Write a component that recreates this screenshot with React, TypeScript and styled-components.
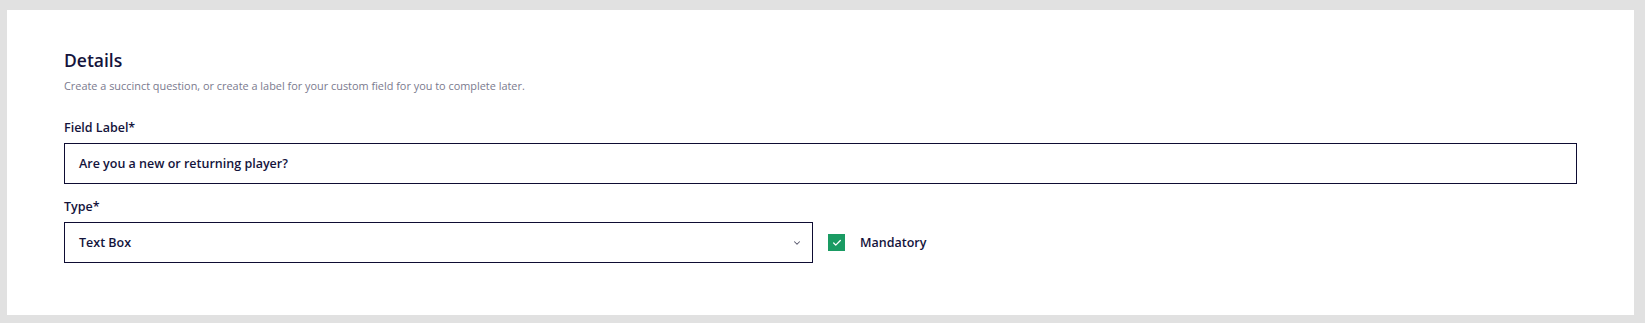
import React from 'react';
import styled, { createGlobalStyle } from 'styled-components';
import { ChevronDown, Check } from 'lucide-react';

const GlobalStyle = createGlobalStyle`
  html, body {
    margin: 0;
    padding: 0;
    background: #e1e1e1;
  }
  * {
    box-sizing: border-box;
  }
  body {
    font-family: 'Open Sans', 'Liberation Sans', sans-serif;
    color: #14143c;
  }
`;

const App = () => {
  return (
    <>
      <GlobalStyle />
      <Panel>
        <Heading>Details</Heading>
        <SubTitle>Create a succinct question, or create a label for your custom field for you to complete later.</SubTitle>

        <Field $top={25}>
          <Label>Field Label*</Label>
          <InputBox>Are you a new or returning player?</InputBox>
        </Field>

        <Field $top={14}>
          <Label>Type*</Label>
          <TypeRow>
            <InputBox>
              Text Box
              <Chevron>
                <ChevronDown size={10} strokeWidth={2.5} />
              </Chevron>
            </InputBox>
            <CheckRow>
              <CheckBox>
                <Check size={10} strokeWidth={3} color="#ffffff" />
              </CheckBox>
              <CheckLabel>Mandatory</CheckLabel>
            </CheckRow>
          </TypeRow>
        </Field>
      </Panel>
    </>
  );
};

const Panel = styled.div`
  margin: 10px 11px 8px 7px;
  height: 305px;
  padding: 38px 57px 0 57px;
  background: #ffffff;
  display: flex;
  flex-direction: column;
`;

const Heading = styled.div`
  font-size: 17.5px;
  line-height: 24px;
  font-weight: 600;
  color: #14143c;
`;

const SubTitle = styled.div`
  margin-top: 6px;
  font-size: 10.9px;
  line-height: 16px;
  color: #7a7a8e;
`;

const Field = styled.div<{ $top: number }>`
  margin-top: ${(props) => props.$top}px;
  display: flex;
  flex-direction: column;
  gap: 6px;
`;

const Label = styled.div`
  font-size: 12.5px;
  line-height: 18px;
  font-weight: 600;
  color: #14143c;
`;

const InputBox = styled.div`
  position: relative;
  height: 41px;
  padding: 0 14px;
  border: 1.5px solid #0e0c33;
  display: flex;
  align-items: center;
  font-size: 12.5px;
  font-weight: 600;
  color: #14143c;
`;

const Chevron = styled.span`
  position: absolute;
  right: 10px;
  top: 50%;
  transform: translateY(-50%);
  display: flex;
  color: #55556a;
`;

const TypeRow = styled.div`
  display: grid;
  grid-template-columns: 1fr 1fr;
  column-gap: 15px;
`;

const CheckRow = styled.div`
  display: flex;
  align-items: center;
  gap: 15px;
`;

const CheckBox = styled.div`
  width: 17px;
  height: 17px;
  background: #1a9b63;
  display: flex;
  align-items: center;
  justify-content: center;
`;

const CheckLabel = styled.div`
  font-size: 12.5px;
  font-weight: 600;
  color: #14143c;
`;

export default App;
